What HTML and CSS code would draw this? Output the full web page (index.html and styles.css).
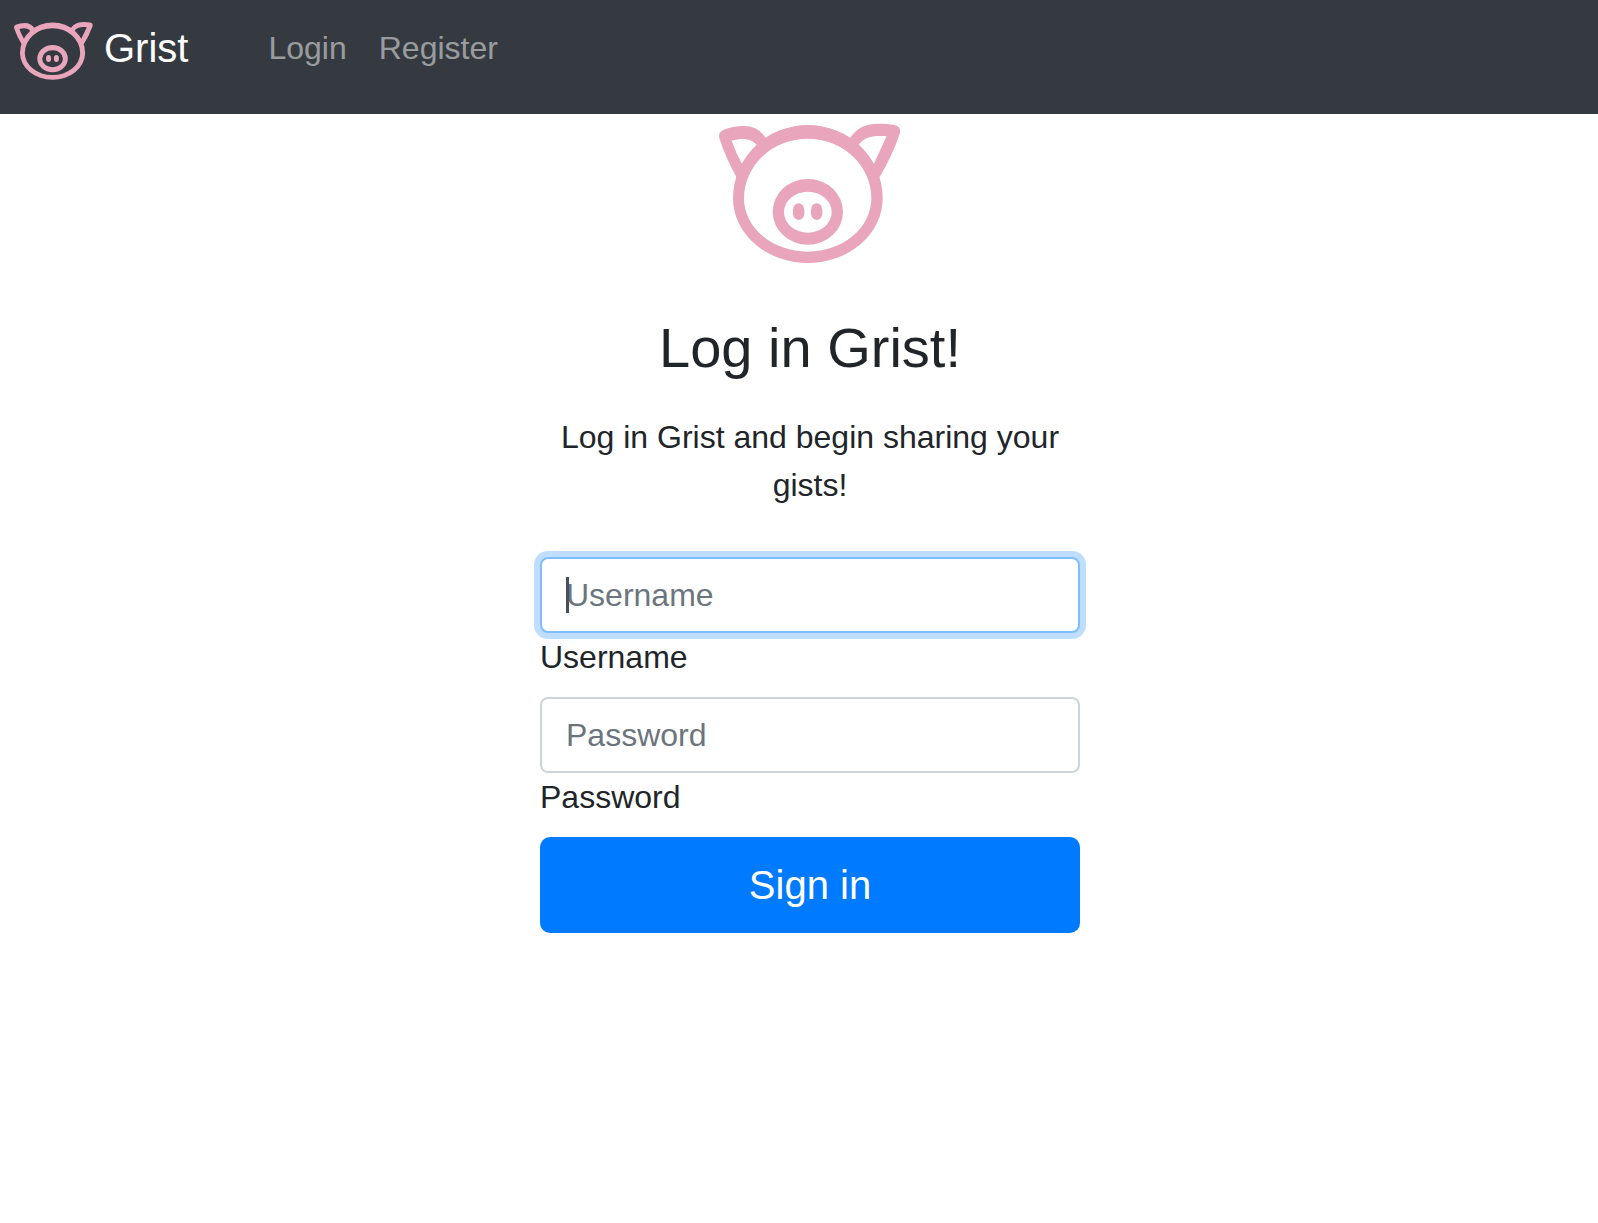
FILE: index.html
```html
<!DOCTYPE html>
<html lang="en">
<head>
  <meta charset="utf-8">
  <meta name="viewport" content="width=device-width, initial-scale=1">
  <title>Grist</title>
  <link rel="stylesheet" href="styles.css">
</head>
<body>
  <svg class="sprite" aria-hidden="true">
    <symbol id="pig" viewBox="30 12 600 456" preserveAspectRatio="none">
      <path fill-rule="evenodd" d="M99 265A224.500 220 0 0 1 548 265A224.500 194 0 0 1 99 265ZM132 265A191 160 0 0 0 514 265A191 179 0 0 0 132 265Z"/>
      <path fill-rule="evenodd" d="M218 305.500A105.500 98.500 0 0 1 429 305.500A105.500 98.500 0 0 1 218 305.500ZM252 306.500A71.500 61.500 0 0 0 395 306.500A71.500 61.500 0 0 0 252 306.500Z"/>
      <rect x="279" y="280" width="34" height="50" rx="17" ry="20"/>
      <rect x="333" y="280" width="34" height="50" rx="17" ry="20"/>
      <path fill-rule="evenodd" d="M111 204Q76 142 58 84Q54 68 69 60Q100 48 130 48Q176 47 200 88L190 120L135 190ZM95 92Q108 130 128 166Q147 134 173 109C157 84 127 83 95 92Z"/>
      <path fill-rule="evenodd" d="M448 88Q466 54 505 44Q540 38 583 45Q604 50 600 69Q576 140 537 204L515 190L455 120ZM474 108Q503 138 520 165L560 79C525 76 492 78 474 108Z"/>
    </symbol>
  </svg>

  <header class="navbar">
    <a class="brand" href="#">
      <svg class="brand-logo" aria-hidden="true"><use href="#pig"/></svg>
      <span>Grist</span>
    </a>
    <nav class="nav-links">
      <a href="#">Login</a>
      <a href="#">Register</a>
    </nav>
  </header>

  <main class="page">
    <form class="signin">
      <svg class="logo" aria-hidden="true"><use href="#pig"/></svg>
      <h1>Log in Grist!</h1>
      <p>Log in Grist and begin sharing your gists!</p>
      <div class="field field-active">
        <input id="username" type="text" placeholder="Username" autofocus>
        <label for="username">Username</label>
      </div>
      <div class="field">
        <input id="password" type="password" placeholder="Password">
        <label for="password">Password</label>
      </div>
      <button type="submit">Sign in</button>
    </form>
  </main>
</body>
</html>
```
FILE: styles.css
```css
*,
*::before {
  box-sizing: border-box;
}

body {
  margin: 0;
  font-family: "Liberation Sans", Arial, sans-serif;
  font-size: 32px;
  line-height: 48px;
  color: #212529;
  background: #fff;
}

.sprite {
  display: none;
}

.navbar {
  display: flex;
  align-items: flex-start;
  gap: 80px;
  padding: 18px 10px 33px;
  background: #343a40;
}

.brand {
  display: flex;
  align-items: flex-start;
  gap: 7px;
  font-size: 40px;
  line-height: 60px;
  color: #fff;
  text-decoration: none;
}

.brand-logo {
  width: 87px;
  height: 63px;
  fill: #e8a5bb;
}

.nav-links {
  display: flex;
  gap: 32px;
  padding-top: 6px;
}

.nav-links a {
  color: rgba(255, 255, 255, 0.5);
  text-decoration: none;
}

.page {
  padding-left: 22px;
}

.signin {
  display: flex;
  flex-direction: column;
  max-width: 540px;
  margin: 0 auto;
}

.logo {
  align-self: center;
  width: 200px;
  height: 152px;
  margin-bottom: 48px;
  fill: #e8a5bb;
}

h1 {
  margin: 0 0 32px;
  font-size: 56px;
  font-weight: 400;
  line-height: 67px;
  text-align: center;
}

p {
  margin: 0 0 48px;
  text-align: center;
}

.field {
  position: relative;
  display: flex;
  flex-direction: column;
  margin-bottom: 16px;
}

.field input {
  width: 100%;
  height: 76px;
  padding: 12px 24px;
  border: 2px solid #ced4da;
  border-radius: 8px;
  font: inherit;
  color: #495057;
  background: #fff;
  caret-color: transparent;
}

.field input::placeholder {
  color: #6c757d;
  opacity: 1;
}

.field input:focus,
.field-active input {
  border-color: #80bdff;
  outline: 0;
  box-shadow: 0 0 0 6px rgba(0, 123, 255, 0.25);
}

/* Steady text cursor in the active field */
.field-active::before {
  content: "";
  position: absolute;
  top: 20px;
  left: 26px;
  width: 3px;
  height: 36px;
  background: #495057;
}

button {
  height: 96px;
  border: 0;
  border-radius: 10px;
  font: inherit;
  font-size: 40px;
  color: #fff;
  background: #007bff;
  cursor: pointer;
}
```
